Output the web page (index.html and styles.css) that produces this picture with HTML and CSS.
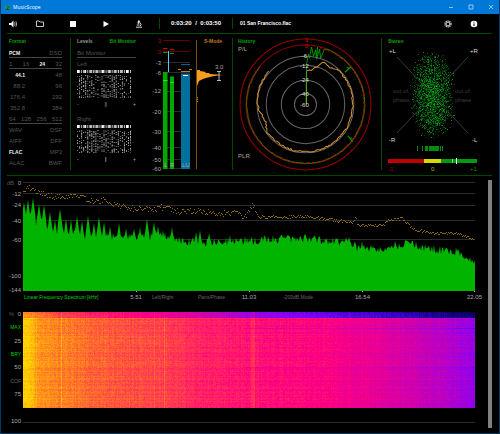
FILE: index.html
```html
<!DOCTYPE html>
<html lang="en">
<head>
    <meta charset="UTF-8">
    <meta name="viewport" content="width=device-width, initial-scale=1.0">
    <title>MusicScope</title>
    <link rel="stylesheet" href="styles.css">
</head>
<body>
    <header class="titlebar">
        <svg class="app-icon" viewBox="0 0 8 8">
            <circle cx="4" cy="4" r="3.5" fill="#1b8f86"/>
            <path d="M3.5 1.5L5 3L4 5.5M2 6.2H6" stroke="#06333a" fill="none"/>
        </svg>
        <span class="app-name">MusicScope</span>
        <button class="win-button" aria-label="Minimize"><svg viewBox="0 0 6 6"><path d="M1 3.5H5"/></svg></button>
        <button class="win-button" aria-label="Maximize"><svg viewBox="0 0 6 6"><path d="M1 1H5V5H1Z"/></svg></button>
        <button class="win-button" aria-label="Close"><svg viewBox="0 0 6 6"><path d="M1 1L5 5M5 1L1 5"/></svg></button>
    </header>

    <main>
        <nav class="toolbar">
            <button class="tool" aria-label="Volume">
                <svg viewBox="0 0 10 10"><path d="M1 4H3L5.5 1.5V8.5L3 6H1Z" fill="#eee"/><path d="M6.5 3.3Q7.6 5 6.5 6.7M7.8 2.2Q9.6 5 7.8 7.8" stroke="#ccc" stroke-width=".8" fill="none"/></svg>
            </button>
            <button class="tool" aria-label="Open">
                <svg viewBox="0 0 10 10"><path d="M1.5 7.5V2H4L5 3H8.5V7.5Z" stroke="#ddd" stroke-width=".9" fill="none"/></svg>
            </button>
            <button class="tool" aria-label="Stop">
                <svg viewBox="0 0 10 10"><path d="M2 2H8V8H2Z" fill="#fff"/></svg>
            </button>
            <button class="tool" aria-label="Play">
                <svg viewBox="0 0 10 10"><path d="M2.5 2L8 5L2.5 8Z" fill="#fff"/></svg>
            </button>
            <button class="tool" aria-label="Analyse">
                <svg viewBox="0 0 10 10"><path d="M4.2 1.2L6.2 2L5 5L3.3 4.3Z" fill="#ddd"/><path d="M6 3.5Q8 5.5 6.3 7M2.8 6H5.5M2 8.2H8" stroke="#ddd" fill="none"/></svg>
            </button>
            <div class="time"><span>0:03:20</span><span>/</span><span>0:03:50</span></div>
            <div class="track">01 San Francisco.flac</div>
            <button class="tool-right" aria-label="Settings">
                <svg viewBox="0 0 10 10"><circle cx="5" cy="5" r="3" stroke="#ddd" stroke-width="1.2" stroke-dasharray="1.2 .7" fill="none"/><circle cx="5" cy="5" r="2" stroke="#ddd" fill="none"/></svg>
            </button>
            <button class="tool-right" aria-label="Info">
                <svg viewBox="0 0 10 10"><circle cx="5" cy="5" r="3.3" fill="#fff"/><path d="M5 4.4V7M5 2.7V3.6" stroke="#000"/></svg>
            </button>
        </nav>

        <div class="panels">
            <section class="panel format">
                <h2>Format</h2>
                <div class="row line"><b>PCM</b><span>DSD</span></div>
                <div class="row line"><span>1</span><span>16</span><b>24</b><span>32</span></div>
                <div class="row rate"><b>44.1</b><span>48</span></div>
                <div class="row rate"><span>88.2</span><span>96</span></div>
                <div class="row rate"><span>176.4</span><span>192</span></div>
                <div class="row rate"><span>352.8</span><span>384</span></div>
                <div class="row line"><span>64</span><span>128</span><span>256</span><span>512</span></div>
                <div class="row"><span>WAV</span><span>DSF</span></div>
                <div class="row"><span>AIFF</span><span>DFF</span></div>
                <div class="row"><b>FLAC</b><span>MP3</span></div>
                <div class="row"><span>ALAC</span><span>BWF</span></div>
            </section>

            <section class="panel levels">
                <div class="tabs"><button class="tab">Levels</button><button class="tab active">Bit Monitor</button></div>
                <div class="row line"><span>Bit Monitor</span></div>
                <div class="row"><span>Left</span></div>
                <canvas class="bits" width="53" height="28"></canvas>
                <div class="balance"><span>-</span><span>||</span><span>+</span></div>
                <div class="row"><span>Right</span></div>
                <canvas class="bits" width="53" height="28"></canvas>
                <div class="balance"><span>-</span><span class="mark">|</span><span>+</span></div>
            </section>

            <section class="meters">
                <svg class="graph" id="meters" viewBox="0 0 80 138">
                    <g class="grid-line">
                        <path d="M11 26.5H38M11 36.5H38M11 55.5H38M11 75.5H38M11 95.5H38M11 111.5H38M11 123.5H38M11 132.5H38"/>
                    </g>
                    <path d="M11 4.5H38M11 15.5H38" stroke="#600"/>
                    <g class="scale end">
                        <text x="9" y="7" fill="#b00">3</text>
                        <text x="9" y="18" fill="#b00">0</text>
                        <text x="9" y="29">-3</text>
                        <text x="9" y="39">-6</text>
                        <text x="9" y="57">-12</text>
                        <text x="9" y="78">-20</text>
                        <text x="9" y="98">-30</text>
                        <text x="9" y="114">-40</text>
                        <text x="9" y="126">-50</text>
                        <text x="9" y="135">-60</text>
                    </g>
                    <path d="M11 36H15.5V133H11ZM18 40.5H22V133H18Z" fill="#0a0"/>
                    <path d="M11 44.5H15.5M18 46.5H22" stroke="#0f0"/>
                    <path d="M11 12.5H15.5M18 13.5H22" stroke="#d00"/>
                    <path d="M11 16.5H15.5M18 17.5H22" stroke="#090"/>
                    <path d="M16.5 15V36" stroke="#5cc8f0"/>
                    <path d="M29 37.5H38V133H29Z" fill="#00709c"/>
                    <path d="M29 28.5H38" stroke="#069"/>
                    <path d="M31 39.5H36" stroke="#fff"/>
                    <path d="M26 33.5H29M29 35.5H38M37 33.5H40" stroke="#c8821a"/>
                    <g class="scale"><text x="12" y="131">L</text><text x="18" y="131">R</text><text x="30" y="131">LU</text></g>
                    <path d="M44.5 4V133" stroke="#7a5010"/>
                    <path d="M45 34L48 34L48 35L54 36L53 37L58 37L57 38L65 38.5L71 39L62 40L58 41L54 42L51 43L49 44L47 45L45 50Z" fill="#f59d20"/>
                    <path d="M45 61.5H46M45 63.5H46M45 65.5H46" stroke="#c8821a"/>
                    <text class="head" x="52" y="7" fill="#c07a10">S-Mode</text>
                    <text class="scale" x="63" y="33">3.0</text>
                    <path d="M65 35.5H69M65 44.5H69M67 35.5V44.5" stroke="#bbb"/>
                </svg>
            </section>

            <section class="panel">
                <svg class="graph" id="history" viewBox="0 0 148 138">
                    <text class="head" x="6" y="7" fill="#0a0">History</text>
                    <text class="scale" x="6" y="15">P/L</text>
                    <text class="scale" x="6" y="121">PLR</text>
                    <g fill="none" stroke="#666">
                        <circle cx="73" cy="68" r="48"/>
                        <circle cx="73" cy="68" r="39"/>
                        <circle cx="73" cy="68" r="24"/>
                        <circle cx="73" cy="68" r="11"/>
                    </g>
                    <circle cx="73" cy="68" r="65" fill="none" stroke="#900"/>
                    <circle cx="73" cy="68" r="59" fill="none" stroke="#800"/>
                    <g id="traces" fill="none"></g>
                    <g class="scale bright middle">
                        <text x="74" y="6" fill="#d00">3</text>
                        <text x="74" y="12" fill="#d00">0</text>
                        <text x="72" y="22">-6</text>
                        <text x="72" y="32">-12</text>
                        <text x="72" y="46">-24</text>
                        <text x="72" y="60">-40</text>
                        <text x="72" y="71">-60</text>
                    </g>
                </svg>
            </section>

            <section class="panel">
                <svg class="graph" id="stereo" viewBox="0 0 111 138">
                    <text class="head" x="7" y="7" fill="#0a0">Stereo</text>
                    <path d="M16 21L87 97M87 21L16 97" stroke="#3a3a3a"/>
                    <g class="scale bright">
                        <text x="8" y="17">+L</text>
                        <text x="89" y="17">+R</text>
                        <text x="8" y="106">-R</text>
                        <text x="91" y="106">-L</text>
                    </g>
                    <g class="scale dim">
                        <text x="12" y="57">out of</text>
                        <text x="12" y="66">phase</text>
                        <text x="74" y="57">out of</text>
                        <text x="74" y="66">phase</text>
                    </g>
                    <g id="cloud"></g>
                    <path d="M7 123H43V127H7Z" fill="#c00000"/>
                    <path d="M43 123H60V127H43Z" fill="#d8d800"/>
                    <path d="M60 123H96V127H60Z" fill="#009a10"/>
                    <path d="M71.5 123V127" stroke="#6d6"/>
                    <path d="M75.5 122V128" stroke="#fff"/>
                    <g class="scale">
                        <text x="7" y="135" fill="#a00">-1</text>
                        <text x="50" y="135" fill="#bb0">0</text>
                        <text x="89" y="135" fill="#090">+1</text>
                    </g>
                </svg>
            </section>
        </div>

        <div class="charts-wrap">
            <div class="charts">
                <svg class="graph" id="spectrum" viewBox="0 0 468 116">
                    <g class="grid-line">
                        <path d="M16 6.5H468M16 17.5H468M16 29.5H468M16 44.5H468M16 63.5H468"/>
                    </g>
                    <g class="scale end">
                        <text x="7" y="9" fill="#555">dB</text>
                        <text x="14" y="9">0</text>
                        <text x="14" y="20">-12</text>
                        <text x="14" y="31">-24</text>
                        <text x="14" y="47">-40</text>
                        <text x="14" y="66">-60</text>
                        <text x="14" y="102">-100</text>
                        <text x="14" y="116">-144</text>
                    </g>
                </svg>
                <div class="freq-row">
                    <button class="mode active">Linear Frequency Spectrum [kHz]</button>
                    <span class="tick">5.51</span>
                    <button class="mode">Left/Right</button>
                    <button class="mode">Pans/Phase</button>
                    <span class="tick">11.03</span>
                    <button class="mode shift">-200dB Mode</button>
                    <span class="tick">16.54</span>
                    <span class="tick last">22.05</span>
                </div>
                <div class="spectrogram">
                    <div class="axis">
                        <div class="zero"><i>%</i><span>0</span></div>
                        <button class="mode active">MAX</button>
                        <span>25</span>
                        <button class="mode active">BRY</button>
                        <span>50</span>
                        <button class="mode">COF</button>
                        <span>75</span>
                        <span></span>
                        <span>100</span>
                    </div>
                    <div class="heat">
                        <canvas id="heat" width="452" height="96"></canvas>
                    </div>
                </div>
            </div>
            <div class="scrollbar"></div>
        </div>
    </main>
    <script src="scope.js"></script>
</body>
</html>
```
FILE: styles.css
```css
body {
    margin: 0;
    min-height: 100vh;
    box-sizing: border-box;
    background: #000;
    border: 1px solid #003a66;
    border-top: 0;
    color: #aaa;
    font-family: "Liberation Sans", Arial, sans-serif;
    font-size: 5px;
    line-height: 11px;
}
button {
    padding: 0;
    border: 0;
    background: none;
    color: inherit;
    font: inherit;
    cursor: pointer;
}
svg, canvas {
    display: block;
}

/* title bar */
.titlebar {
    display: flex;
    align-items: center;
    height: 14px;
    margin: 0 -1px;
    padding: 0 6px 0 4px;
    background: #0078d7;
    color: #fff;
    box-sizing: border-box;
}
.app-icon {
    width: 7px;
    height: 7px;
    margin-right: 2px;
}
.app-name {
    flex: 1;
    font-family: "Open Sans", sans-serif;
}
.win-button {
    margin-left: 14px;
}
.win-button svg {
    width: 6px;
    height: 6px;
    fill: none;
    stroke: #cfe4f8;
    stroke-width: .7;
}

main {
    padding: 0 7px 4px 6px;
}

/* toolbar */
.toolbar {
    display: flex;
    align-items: center;
    height: 19px;
    border-bottom: 1px solid #004a00;
    color: #fff;
    font-weight: bold;
}
.tool {
    width: 10px;
    margin: 0 5px 0 1px;
}
.tool + .tool {
    margin: 0 11px 0 12px;
}
.tool svg, .tool-right svg {
    width: 10px;
    height: 10px;
}
.time {
    display: flex;
    justify-content: space-between;
    width: 50px;
    padding: 0 11px;
    margin-left: 4px;
    border-left: 1px solid #004a00;
    border-right: 1px solid #004a00;
    font-size: 6px;
}
.track {
    flex: 1;
    padding-left: 7px;
}
.tool-right {
    margin-right: 13px;
}
.tool-right + .tool-right {
    margin-left: 3px;
}

/* top panels */
.panels {
    display: grid;
    grid-template-columns: 63fr 82fr 80fr 149fr 111fr;
    padding-top: 2px;
    border-bottom: 1px solid #004a00;
}
.panel {
    position: relative;
}
.panel:not(.format)::before {
    content: "";
    position: absolute;
    left: 0;
    top: 2px;
    bottom: 5px;
    border-left: 1px solid #004a00;
}
.format {
    padding: 0 8px 0 2px;
}
.levels {
    padding: 0 16px 0 7px;
}
h2 {
    margin: 0;
    color: #00a000;
    font-size: 5px;
    line-height: 11px;
}
.row {
    display: flex;
    justify-content: space-between;
    height: 11px;
    box-sizing: border-box;
    color: #555;
    font-size: 6px;
    line-height: 12px;
}
.row b {
    color: #eee;
    font-size: 5px;
}
.line {
    border-bottom: 1px solid #444;
}
.rate > :first-child {
    width: 16px;
    text-align: right;
}
.tabs {
    display: flex;
    justify-content: space-between;
    height: 11px;
}
.tab {
    color: #999;
    font-weight: bold;
}
.tab.active {
    color: #00a000;
}
.bits {
    width: 92%;
    height: 28px;
    margin-top: 1px;
}
.balance {
    display: flex;
    justify-content: space-between;
    margin: 1px 0 3px;
}
.mark {
    color: #fff;
}
.graph {
    width: 100%;
    height: auto;
}
.graph text {
    font-size: 6px;
}
.graph .head {
    font-size: 5px;
    font-weight: bold;
}
.scale {
    fill: #aaa;
}
.bright {
    fill: #ddd;
}
.dim {
    fill: #3a3a3a;
}
.end {
    text-anchor: end;
}
.middle {
    text-anchor: middle;
}
.grid-line {
    stroke: #2c2c2c;
}

/* charts */
.charts-wrap {
    display: flex;
}
.charts {
    flex: 1;
    margin-right: 13px;
}
.scrollbar {
    width: 4px;
    margin-top: 4px;
    background: #808080;
}
.freq-row {
    display: grid;
    grid-template-columns: 98fr 30fr 46fr 38fr 28fr 84fr 31fr 104fr;
    margin: 0 -7px 5px 16px;
}
.mode {
    padding-left: 1px;
    color: #666;
    text-align: left;
}
.mode.active {
    color: #00d000;
}
.shift {
    padding-left: 20px;
}
.tick {
    font-size: 6px;
    text-align: center;
}
.last {
    text-align: right;
}
.spectrogram {
    display: flex;
    gap: 2px;
}
.axis {
    display: grid;
    grid-template-rows: repeat(9, 1fr);
    align-items: center;
    width: 14px;
    height: 120px;
    font-size: 6px;
    text-align: right;
}
.axis .mode {
    padding: 0;
    font-size: 5px;
    text-align: right;
}
.zero {
    display: flex;
    justify-content: space-between;
    padding-left: 2px;
}
.zero i {
    color: #555;
    font-style: normal;
}
.heat {
    flex: 1;
    height: 110px;
    margin-top: 4px;
    border-bottom: 1px solid #2c2c2c;
}
.heat canvas {
    width: 100%;
    height: 96px;
}
```
FILE: scope.js
```js
const NS = "http://www.w3.org/2000/svg";

let seed = 7;
function rnd() {
    seed = (seed * 16807) % 2147483647;
    return seed / 2147483647;
}

function addPath(parent, attrs) {
    const path = document.createElementNS(NS, "path");
    for (const key in attrs) {
        path.setAttribute(key, attrs[key]);
    }
    parent.appendChild(path);
}

// linear interpolation in a list of [x, y] points
function lerp(points, x) {
    for (let i = 1; i < points.length; i++) {
        if (x <= points[i][0]) {
            const [x0, y0] = points[i - 1];
            const [x1, y1] = points[i];
            return y0 + (y1 - y0) * (x - x0) / (x1 - x0);
        }
    }
    return points[points.length - 1][1];
}

// bit monitor
document.querySelectorAll(".bits").forEach(canvas => {
    const ctx = canvas.getContext("2d");
    for (let x = 0; x < 53; x += 2) {
        ctx.fillStyle = x % 8 == 0 ? "#fff" : "#bbb";
        ctx.fillRect(x, 0, x % 6 == 0 ? 2 : 1, 3);
        const density = 0.3 + rnd() * 0.5;
        for (let y = 5; y < 28; y++) {
            if (rnd() < density) {
                const c = 60 + Math.floor(rnd() * 130);
                ctx.fillStyle = `rgb(${c},${c},${c})`;
                ctx.fillRect(x, y, 1, 1);
            }
        }
    }
});

// history, angle in degrees clockwise from the top
const traces = document.getElementById("traces");
function ring(from, to, radius, jitter) {
    let d = "";
    for (let a = from; a <= to; a += 2) {
        const r = radius(a) + (rnd() - 0.5) * jitter;
        const t = a * Math.PI / 180;
        d += `${d ? "L" : "M"}${(73 + r * Math.sin(t)).toFixed(1)} ${(68 - r * Math.cos(t)).toFixed(1)}`;
    }
    return d;
}
const plr = [[2, 33], [10, 35], [18, 40], [23, 46], [34, 44], [45, 47], [60, 47], [90, 47], [180, 47], [235, 47], [245, 43], [258, 45], [270, 48], [312, 49]];
addPath(traces, {d: "M74 68L74 35" + ring(2, 312, a => lerp(plr, a), 1.6).replace("M", "L"), stroke: "#d8922c"});
addPath(traces, {d: "M73.5 68L74 28L76 18L77 22L79 11L81 20L83 14L84 23L87 13L88 22L92 13" + ring(20, 310, () => 58.5, 1).replace("M", "L"), stroke: "#0a0", "stroke-width": .8});
addPath(traces, {d: ring(14, 310, () => 58.5, 1), stroke: "#c01000", "stroke-dasharray": "2 2"});
addPath(traces, {d: "M112 36L118 31M116 32L114 31M115 99L120 105M117 102L119 101M84 20L85 11", stroke: "#0a0"});

// stereo cloud
const cloud = document.getElementById("cloud");
const shades = ["#002c04", "#004a08", "#00700e", "#0a9a1a"];
shades.forEach((shade, n) => {
    let d = "";
    for (let i = 0; i < [900, 800, 500, 160][n]; i++) {
        const y = 15 + Math.sqrt(rnd()) * 43 + (rnd() < .5 ? 0 : 2 * rnd());
        const yy = rnd() < .5 ? y : 117 - y;
        const lobe = 21 * Math.sqrt(Math.max(0, 1 - Math.pow((yy - 58) / 45, 4)));
        const x = 51 + (rnd() + rnd() - 1) * lobe * 1.05 + (yy - 58) * .02;
        d += `M${Math.round(x)} ${Math.round(yy)}h1v1h-1Z`;
    }
    addPath(cloud, {d: d, fill: shade});
});
let ticks = "";
[37, 42, 45, 46, 47, 49, 50, 51, 52, 53, 54, 55, 56, 57, 58, 60, 62].forEach(x => ticks += `M${x - .5} 110V115`);
addPath(cloud, {d: ticks, stroke: "#00b010", "stroke-width": .8});

// spectrum
const spectrum = document.getElementById("spectrum");
const base = [[16, 43], [30, 48], [50, 57], [75, 61], [100, 61], [130, 62], [160, 59], [180, 66], [240, 66], [260, 63], [300, 63], [340, 66], [350, 71], [375, 73], [400, 68], [430, 73], [455, 77], [468, 87]];
const peaks = [[17, 26], [21, 24], [26, 22], [32, 28], [37, 29], [43, 36], [48, 44], [53, 33], [59, 43], [64, 44], [70, 40], [75, 45], [81, 40], [87, 47], [92, 41], [97, 46], [103, 50], [112, 47], [119, 52], [127, 53], [133, 51], [140, 43], [147, 46], [151, 50], [156, 54], [165, 51], [189, 56], [193, 54], [202, 57], [223, 59], [238, 60], [266, 59], [298, 58], [342, 61], [355, 65], [388, 65]];
let area = "M16 115";
for (let x = 16; x <= 468; x++) {
    let y = lerp(base, x) + (rnd() - 0.5) * 9;
    peaks.forEach(([px, py]) => {
        const dist = Math.abs(px - x);
        if (dist < 3) {
            y = Math.min(y, py + dist * 7);
        }
    });
    area += `L${x} ${y.toFixed(1)}`;
}
addPath(spectrum, {d: area + "L468 115Z", fill: "#00b400"});

const peakHold = [[16, 13], [23, 12], [38, 18], [48, 21], [75, 20], [88, 26], [96, 23], [104, 28], [125, 32], [133, 33], [158, 31], [173, 35], [193, 34], [208, 37], [228, 37], [238, 40], [245, 28], [252, 41], [300, 40], [320, 43], [345, 46], [348, 41], [351, 49], [376, 49], [381, 44], [395, 42], [408, 54], [430, 57], [450, 57], [466, 63]];
let dots = "";
for (let x = 16; x < 467; x++) {
    const spread = x < 250 ? 6 : 3;
    dots += `M${x} ${Math.round(lerp(peakHold, x) + (rnd() - 0.5) * spread)}h1v1h-1Z`;
}
addPath(spectrum, {d: dots, fill: "#906a18"});
addPath(spectrum, {d: "M129.5 115V116M242.5 115V116M355.5 115V116M467.5 115V116", stroke: "#aaa"});

// spectrogram
const stops = [[0, 0, 0, 80], [.15, 48, 0, 190], [.3, 130, 0, 255], [.45, 200, 0, 180], [.6, 255, 0, 128], [.75, 255, 70, 70], [.86, 255, 135, 30], [1, 255, 215, 0]];
function palette(v) {
    return [1, 2, 3].map(c => lerp(stops.map(s => [s[0], s[c]]), Math.max(0, Math.min(1, v))));
}
const heat = document.getElementById("heat").getContext("2d");
const image = heat.createImageData(452, 96);
const level = [[0, .99], [8, .96], [15, .88], [50, .83], [90, .78], [140, .74], [180, .67], [240, .63], [300, .6], [350, .54], [390, .47], [420, .42], [452, .34]];
const intro = [[0, .88], [40, .72], [100, .62], [170, .5], [220, .37], [290, .27], [370, .16], [452, .02]];
const bands = {3: -.08, 16: -.09, 28: -.05, 55: -.06};
const columns = [];
for (let x = 0; x < 452; x++) {
    columns.push((rnd() - .5) * .035);
}
[38, 131, 141, 228, 229, 230, 231].forEach(x => columns[x] += .06);
for (let y = 0; y < 96; y++) {
    const rowNoise = (rnd() - .5) * .05;
    for (let x = 0; x < 452; x++) {
        let v = lerp(y < 6 ? intro : level, x) + rowNoise + columns[x] + (rnd() - .5) * .07;
        if (y > 5 && bands[y] && x > 220) {
            v += bands[y];
        }
        const [r, g, b] = palette(v);
        image.data.set([r, g, b, 255], (y * 452 + x) * 4);
    }
}
heat.putImageData(image, 0, 0);
```
